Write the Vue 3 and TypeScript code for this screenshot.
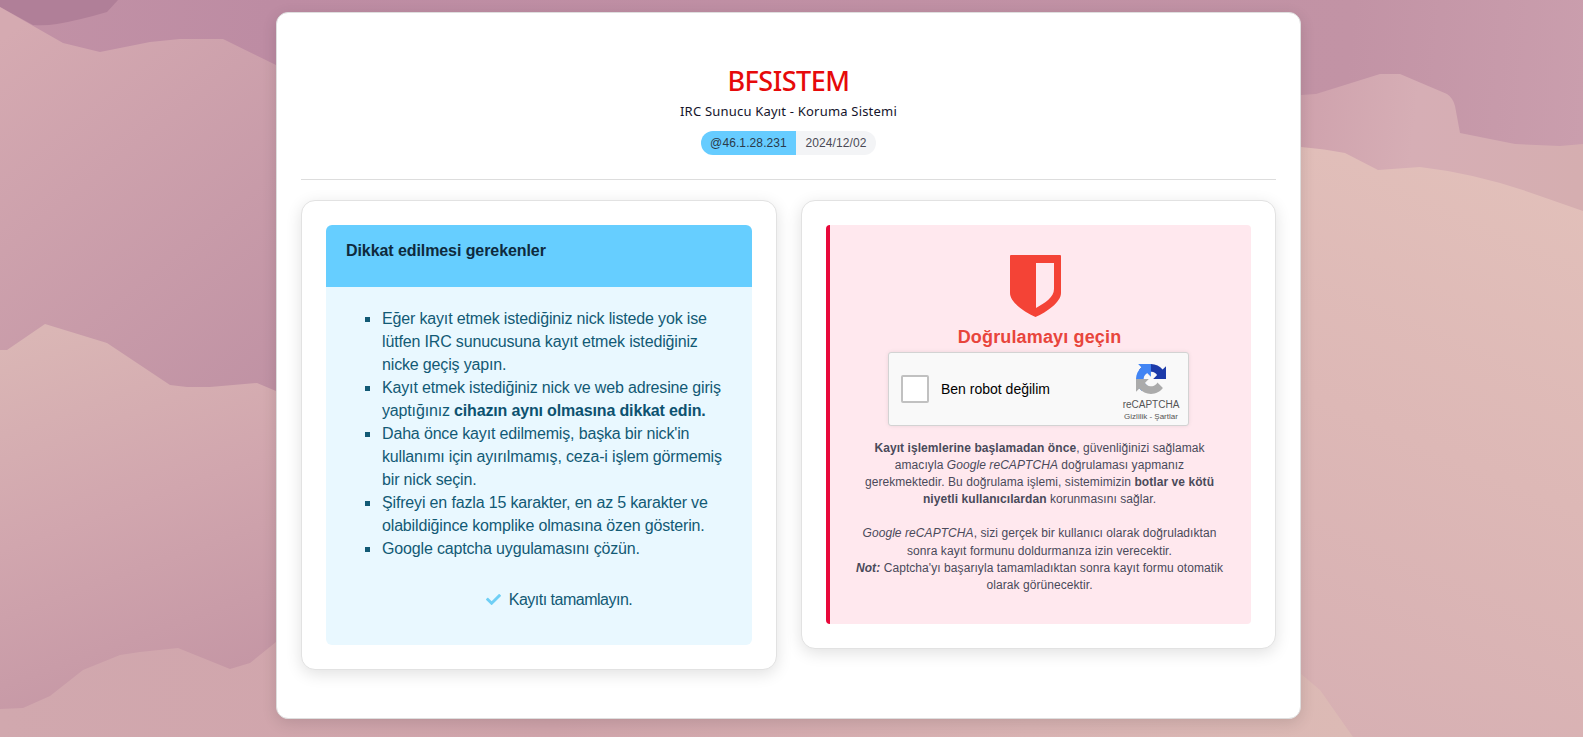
<script setup lang="ts">
const rules: { html: string }[] = [
  { html: 'Eğer kayıt etmek istediğiniz nick listede yok ise lütfen IRC sunucusuna kayıt etmek istediğiniz nicke geçiş yapın.' },
  { html: 'Kayıt etmek istediğiniz nick ve web adresine giriş yaptığınız <b>cihazın aynı olmasına dikkat edin.</b>' },
  { html: "Daha önce kayıt edilmemiş, başka bir nick'in kullanımı için ayırılmamış, ceza-i işlem görmemiş bir nick seçin." },
  { html: 'Şifreyi en fazla 15 karakter, en az 5 karakter ve olabildiğince komplike olmasına özen gösterin.' },
  { html: 'Google captcha uygulamasını çözün.' },
]
</script>

<template>
  <div class="page">
    <svg class="bg" viewBox="0 0 1583 737" preserveAspectRatio="none" aria-hidden="true">
      <defs>
        <linearGradient id="top" gradientUnits="userSpaceOnUse" x1="0" y1="0" x2="1583" y2="120">
          <stop offset="0" stop-color="#c292a6" />
          <stop offset="0.17" stop-color="#bd8ca3" />
          <stop offset="0.85" stop-color="#c293a5" />
          <stop offset="1" stop-color="#ca9ead" />
        </linearGradient>
        <linearGradient id="l2" gradientUnits="userSpaceOnUse" x1="0" y1="40" x2="276" y2="385">
          <stop offset="0" stop-color="#d5aab1" />
          <stop offset="1" stop-color="#c092a4" />
        </linearGradient>
        <linearGradient id="r2" gradientUnits="userSpaceOnUse" x1="1301" y1="120" x2="1583" y2="150">
          <stop offset="0" stop-color="#cfa2ad" />
          <stop offset="0.4" stop-color="#d6aeb5" />
          <stop offset="1" stop-color="#d5aeb0" />
        </linearGradient>
        <linearGradient id="l3" gradientUnits="userSpaceOnUse" x1="20" y1="340" x2="150" y2="700">
          <stop offset="0" stop-color="#dab6b5" />
          <stop offset="0.5" stop-color="#d1a6ae" />
          <stop offset="1" stop-color="#c597a5" />
        </linearGradient>
        <linearGradient id="r3" gradientUnits="userSpaceOnUse" x1="1583" y1="180" x2="1340" y2="737">
          <stop offset="0" stop-color="#e2c0ba" />
          <stop offset="0.5" stop-color="#ddb8b6" />
          <stop offset="1" stop-color="#d7b0b3" />
        </linearGradient>
        <linearGradient id="l4" gradientUnits="userSpaceOnUse" x1="0" y1="0" x2="1583" y2="0">
          <stop offset="0" stop-color="#d1a8ae" />
          <stop offset="0.35" stop-color="#d0a4ab" />
          <stop offset="0.65" stop-color="#d9b3b3" />
          <stop offset="0.85" stop-color="#dcbab5" />
          <stop offset="1" stop-color="#dcbab5" />
        </linearGradient>
      </defs>
      <rect width="1583" height="737" fill="url(#top)" />
      <path d="M0 0 L118 0 L107 12 Q80 20 57 24 Q45 26 33 25 L0 7 Z" fill="#b07f98" />
      <path d="M0 7 L63 43 L100 52 L150 42 L180 39 L223 39 L276 65 L800 80 L800 500 L0 500 Z" fill="url(#l2)" />
      <path d="M800 80 L1301 95 L1316 94 L1380 74 L1400 74 L1447 94 Q1453 98 1455 106 L1460 133 L1515 144 L1560 146 L1583 144 L1583 400 L800 400 Z" fill="url(#r2)" />
      <path d="M0 350 L7 350 L45 324 L107 343 L170 385 L187 387 L210 387 L257 383 L276 391 L800 300 L800 737 L0 737 Z" fill="url(#l3)" />
      <path d="M800 140 L1301 147 Q1325 149 1345 153 L1378 170 L1420 167 Q1480 174 1540 196 L1583 211 L1583 737 L800 737 Z" fill="url(#r3)" />
      <path d="M0 709 L23 708 L50 696 L83 670 L120 655 L140 652 L178 648 L230 669 L250 663 L276 642 L1301 674 L1320 690 L1353 737 L0 737 Z" fill="url(#l4)" />
    </svg>

    <main class="card">
      <header class="head">
        <h1 class="brand">BFSISTEM</h1>
        <p class="sub">IRC Sunucu Kayıt - Koruma Sistemi</p>
        <div class="tags">
          <span class="tag ip">@46.1.28.231</span>
          <span class="tag date">2024/12/02</span>
        </div>
      </header>
      <hr class="rule" />

      <div class="cols">
        <section class="panel">
          <div class="notice-head">Dikkat edilmesi gerekenler</div>
          <div class="notice-body">
            <ul class="list">
              <li v-for="(r, i) in rules" :key="i" v-html="r.html"></li>
            </ul>
            <p class="done">
              <svg class="check" viewBox="0 0 512 512"><path fill="#6fcff5" d="M173.898 439.404l-166.4-166.4c-9.997-9.997-9.997-26.206 0-36.204l36.203-36.204c9.997-9.998 26.207-9.998 36.204 0L192 312.69 432.095 72.596c9.997-9.997 26.207-9.997 36.204 0l36.203 36.204c9.997 9.997 9.997 26.206 0 36.204l-294.4 294.401c-9.998 9.997-26.207 9.997-36.204-.001z" /></svg>
              <span class="done-text">Kayıtı tamamlayın.</span>
            </p>
          </div>
        </section>

        <section class="panel">
          <div class="alert">
            <svg class="shield" viewBox="0 0 51 62">
              <path fill="#f44336" fill-rule="evenodd" d="M1 0 H50 a1 1 0 0 1 1 1 V38 C51 47 37 57 25.5 62 C14 57 0 47 0 38 V1 a1 1 0 0 1 1-1Z M26 8 V53 C35 48 44 42 44 34 V8 Z" />
            </svg>
            <h2 class="alert-title">Doğrulamayı geçin</h2>
            <div class="captcha">
              <span class="box"></span>
              <span class="robot">Ben robot değilim</span>
              <div class="brandmark">
                <svg class="rc" viewBox="0 0 64 64">
                  <path fill="#1c3aa9" d="M64 31.955l-.033-1.37V4.687l-7.16 7.16C50.948 4.674 42.033.093 32.05.093c-10.4 0-19.622 4.96-25.458 12.64l11.736 11.86a15.55 15.55 0 0 1 4.754-5.334c2.05-1.6 4.952-2.906 8.968-2.906.485 0 .86.057 1.135.163 4.976.393 9.288 3.14 11.828 7.124l-8.307 8.307 26.29.004" />
                  <path fill="#4285f4" d="M31.862.094l-1.37.033H4.594l7.16 7.16C4.58 13.147 0 22.06 0 32.046c0 10.4 4.96 19.622 12.64 25.458L24.5 45.768a15.55 15.55 0 0 1-5.334-4.754c-1.6-2.05-2.906-4.952-2.906-8.968 0-.485.057-.86.163-1.135.393-4.976 3.14-9.288 7.124-11.828l8.307 8.307.004-26.29" />
                  <path fill="#ababab" d="M.001 32.045l.033 1.37v25.898l7.16-7.16c5.86 7.173 14.775 11.754 24.76 11.754 10.4 0 19.622-4.96 25.458-12.64l-11.736-11.86a15.55 15.55 0 0 1-4.754 5.334c-2.05 1.6-4.952 2.906-8.968 2.906-.485 0-.86-.057-1.135-.163-4.976-.393-9.288-3.14-11.828-7.124l8.307-8.307-26.29-.004" />
                </svg>
                <span class="rc-name">reCAPTCHA</span>
                <span class="rc-links">Gizlilik - Şartlar</span>
              </div>
            </div>
            <p class="copy">
              <b>Kayıt işlemlerine başlamadan önce</b>, güvenliğinizi sağlamak amacıyla <i>Google reCAPTCHA</i> doğrulaması yapmanız gerekmektedir. Bu doğrulama işlemi, sistemimizin <b>botlar ve kötü niyetli kullanıcılardan</b> korunmasını sağlar.
              <br /><br />
              <i>Google reCAPTCHA</i>, sizi gerçek bir kullanıcı olarak doğruladıktan sonra kayıt formunu doldurmanıza izin verecektir.<br />
              <b><i>Not:</i></b> Captcha'yı başarıyla tamamladıktan sonra kayıt formu otomatik olarak görünecektir.
            </p>
          </div>
        </section>
      </div>
    </main>
  </div>
</template>

<style>
html, body { margin: 0; overflow: hidden; }
</style>

<style scoped>
.page {
  position: relative;
  height: 737px;
  box-sizing: border-box;
  padding: 12px 6px 0 0;
  display: flex;
  justify-content: center;
  align-items: flex-start;
  overflow: hidden;
  font-family: "Liberation Sans", Arial, sans-serif;
}
.bg {
  position: absolute;
  inset: 0;
  width: 100%;
  height: 100%;
}
.card {
  position: relative;
  width: 1025px;
  height: 707px;
  box-sizing: border-box;
  background: #fff;
  border: 1px solid #dedede;
  border-radius: 12px;
  padding: 0 24px;
  box-shadow: 0 4px 15px rgba(0, 0, 0, 0.12);
}
.head {
  height: 166px;
  box-sizing: border-box;
  padding-top: 50px;
  text-align: center;
}
.brand {
  margin: 0;
  height: 36px;
  font: 500 27px/36px "Noto Sans", Tahoma, sans-serif;
  color: #e60a0a;
  letter-spacing: -0.5px;
}
.sub {
  margin: 2px 0 0;
  font: 400 13px/20px "Noto Sans", Tahoma, sans-serif;
  color: #14142b;
  letter-spacing: 0.2px;
}
.tags {
  display: flex;
  justify-content: center;
  margin-top: 10px;
}
.tag {
  height: 24px;
  font-size: 12px;
  line-height: 24px;
  letter-spacing: 0.1px;
  text-align: center;
  box-sizing: border-box;
}
.ip {
  width: 95px;
  background: #66ccff;
  color: #2a3a4a;
  border-radius: 12px 0 0 12px;
}
.date {
  width: 80px;
  background: #f3f4f6;
  color: #4a4a55;
  border-radius: 0 12px 12px 0;
}
.rule {
  margin: 0;
  border: 0;
  border-top: 1px solid #dddddd;
}
.cols {
  display: grid;
  grid-template-columns: 476px 475px;
  column-gap: 24px;
  align-items: start;
  margin-top: 20px;
}
.panel {
  background: #fff;
  border: 1px solid #e2e2e2;
  border-radius: 14px;
  padding: 24px;
  box-shadow: 0 4px 16px rgba(0, 0, 0, 0.12);
}
.notice-head {
  height: 62px;
  box-sizing: border-box;
  padding: 16px 20px 0;
  background: #66ceff;
  border-radius: 6px 6px 0 0;
  font-size: 16px;
  font-weight: 700;
  line-height: 20px;
  letter-spacing: -0.08px;
  color: #0e2a3d;
}
.notice-body {
  background: #e9f8ff;
  border-radius: 0 0 6px 6px;
  padding: 20px 25px 34px 56px;
  color: #125a75;
  font-size: 16px;
  line-height: 23px;
  letter-spacing: -0.16px;
}
.list {
  margin: 0;
  padding: 0;
  list-style: none;
}
.list li {
  position: relative;
}
.list li::before {
  content: "";
  position: absolute;
  left: -17px;
  top: 10px;
  width: 5px;
  height: 5px;
  background: #125a75;
}
.list :deep(b) {
  color: #0d5270;
}
.done {
  margin: 28px 0 0;
  display: flex;
  justify-content: center;
  align-items: center;
  gap: 8px;
  padding-left: 9px;
}
.done-text {
  letter-spacing: -0.5px;
}
.check {
  width: 15px;
  height: 15px;
  flex: none;
}
.alert {
  background: #ffe8ee;
  border-left: 4px solid #e8083a;
  border-radius: 4px;
  padding: 30px 26px 30px 24px;
  display: flex;
  flex-direction: column;
  align-items: center;
}
.shield {
  width: 51px;
  height: 62px;
  display: block;
  margin-right: 8px;
}
.alert-title {
  margin: 7px 0 2px;
  font-size: 18px;
  line-height: 26px;
  font-weight: 700;
  letter-spacing: 0.15px;
  color: #e8453c;
}
.captcha {
  width: 301px;
  height: 74px;
  box-sizing: border-box;
  margin-right: 2px;
  background: #f9f9f9;
  border: 1px solid #d3d3d3;
  border-radius: 3px;
  box-shadow: 0 0 4px rgba(0, 0, 0, 0.08);
  display: flex;
  align-items: center;
  padding: 0 8px 0 12px;
}
.box {
  width: 28px;
  height: 28px;
  box-sizing: border-box;
  background: #fff;
  border: 2px solid #c1c1c1;
  border-radius: 2px;
  flex: none;
}
.robot {
  margin-left: 12px;
  font-size: 14px;
  color: #000;
  flex: 1;
}
.brandmark {
  width: 58px;
  display: flex;
  flex-direction: column;
  align-items: center;
  margin-top: 7px;
  margin-left: -1px;
}
.rc {
  width: 30px;
  height: 30px;
  display: block;
}
.rc-name {
  font-size: 10px;
  line-height: 12px;
  margin-top: 5px;
  color: #555;
}
.rc-links {
  font-size: 8px;
  line-height: 10px;
  margin-top: 1px;
  color: #555;
  white-space: nowrap;
}
.copy {
  margin: 14px 0 0;
  width: 369px;
  text-align: center;
  font-size: 12px;
  line-height: 17.1px;
  letter-spacing: 0.07px;
  color: #4a4a5a;
}
</style>
